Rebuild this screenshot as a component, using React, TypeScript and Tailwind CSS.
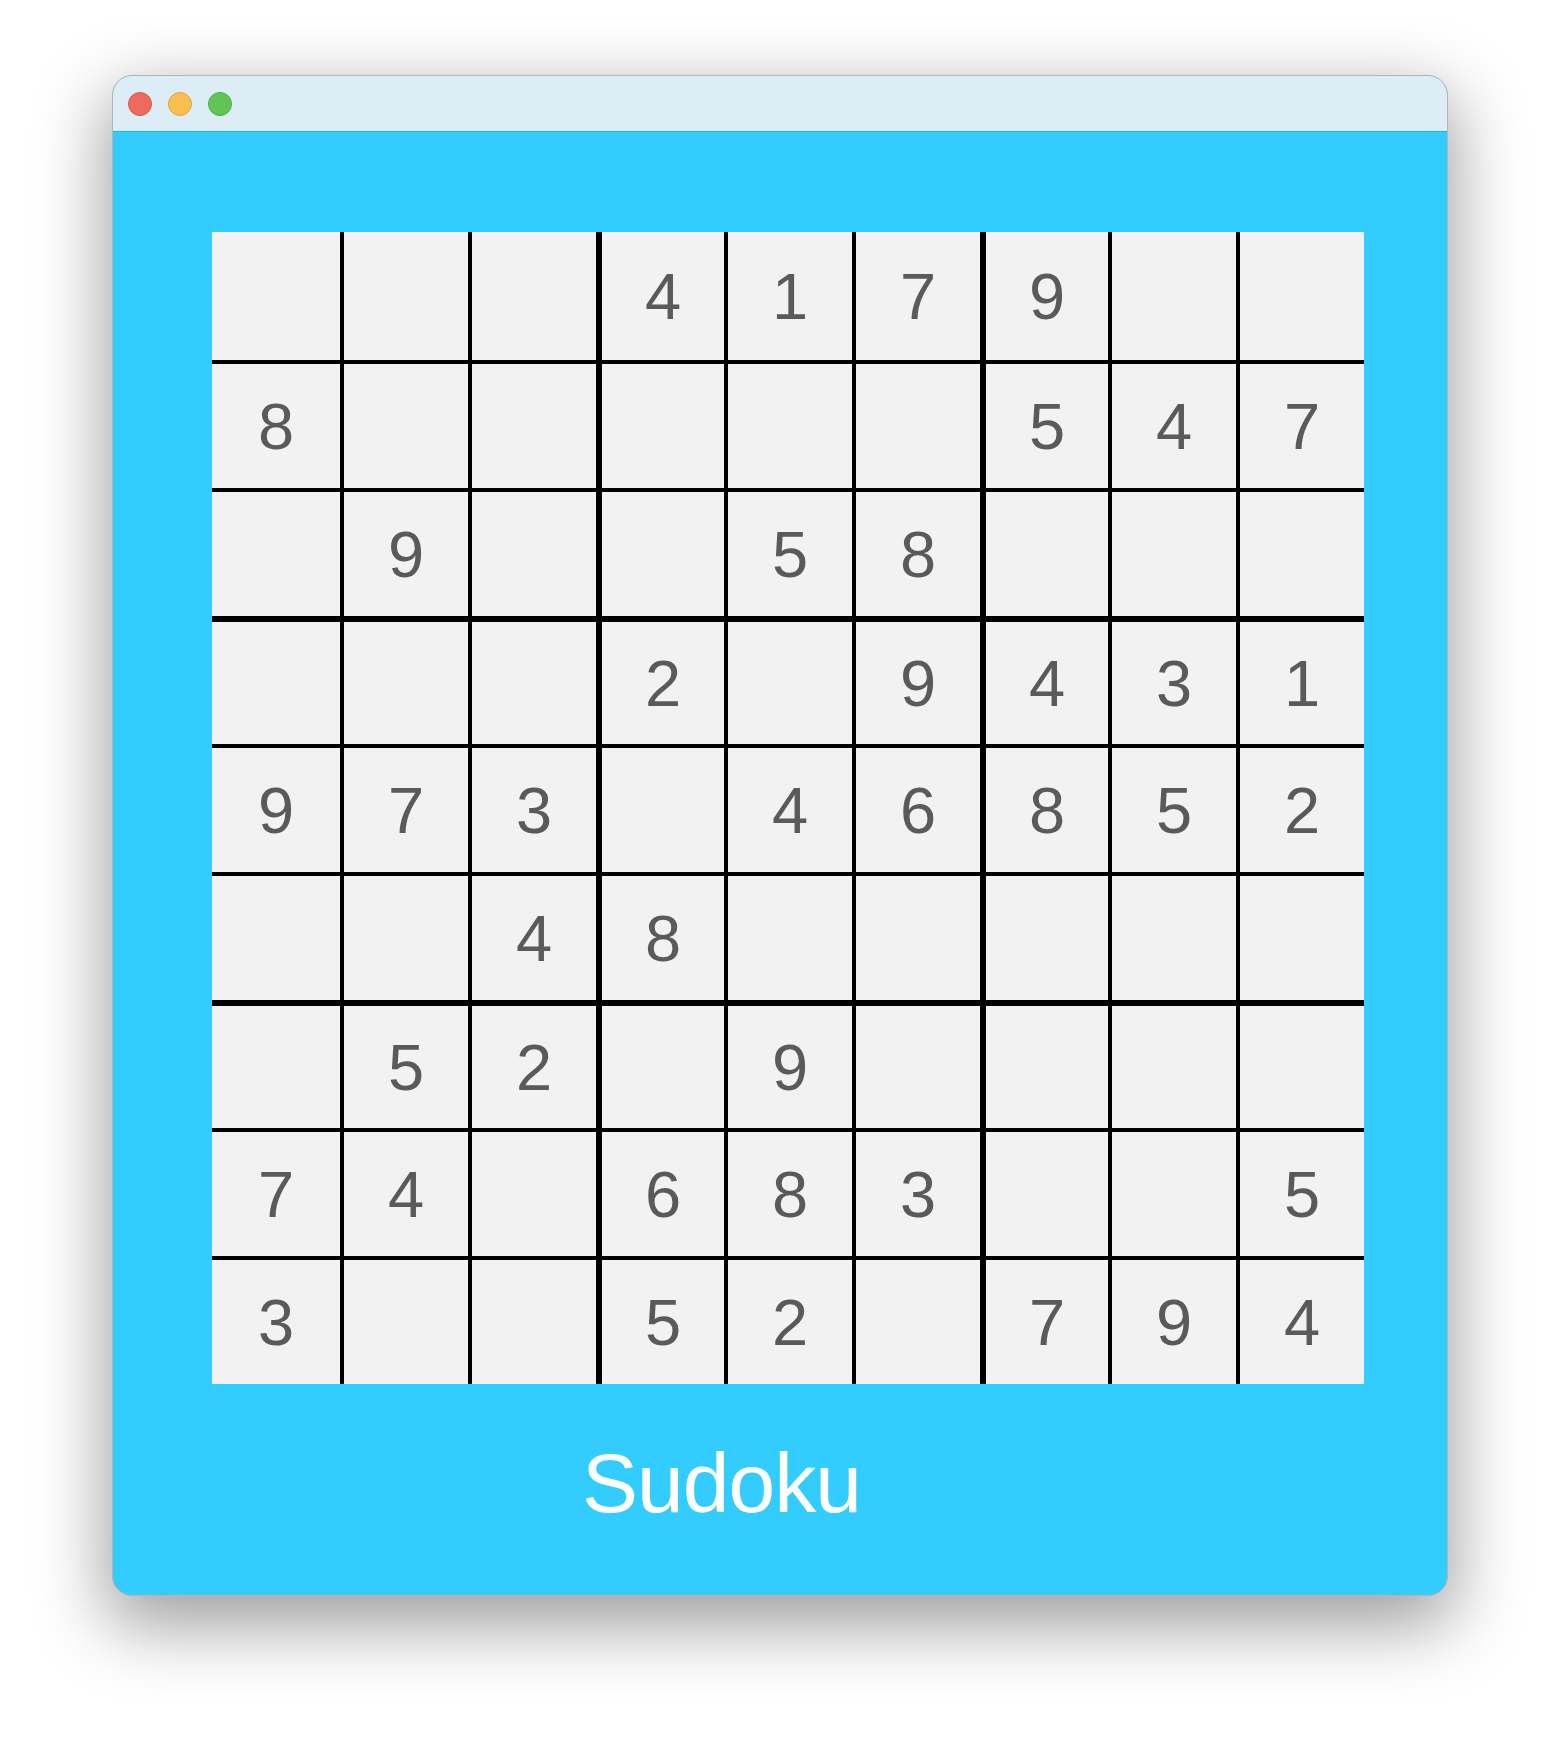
import React from 'react';

// 0 = empty cell
const puzzle: number[][] = [
  [0, 0, 0, 4, 1, 7, 9, 0, 0],
  [8, 0, 0, 0, 0, 0, 5, 4, 7],
  [0, 9, 0, 0, 5, 8, 0, 0, 0],
  [0, 0, 0, 2, 0, 9, 4, 3, 1],
  [9, 7, 3, 0, 4, 6, 8, 5, 2],
  [0, 0, 4, 8, 0, 0, 0, 0, 0],
  [0, 5, 2, 0, 9, 0, 0, 0, 0],
  [7, 4, 0, 6, 8, 3, 0, 0, 5],
  [3, 0, 0, 5, 2, 0, 7, 9, 4],
];

const leftBorder = (c: number) => {
  if (c === 0) return '';
  if (c % 3 === 0) return 'border-l-[6px]';
  return 'border-l-4';
};

const topBorder = (r: number) => {
  if (r === 0) return '';
  if (r % 3 === 0) return 'border-t-[6px]';
  return 'border-t-4';
};

const Cell: React.FC<{ value: number; row: number; col: number }> = ({ value, row, col }) => (
  <div
    className={`flex items-center justify-center bg-[#f2f2f2] border-black text-[65px] leading-none text-[#5a5a5a] ${leftBorder(col)} ${topBorder(row)}`}
  >
    {value !== 0 ? value : ''}
  </div>
);

const TrafficLights: React.FC = () => (
  <div className="flex items-center gap-4 pl-[15px]">
    <span className="w-6 h-6 rounded-full bg-[#ee6a5f] border border-[#d9564b]" />
    <span className="w-6 h-6 rounded-full bg-[#f6bf4f] border border-[#dfa53a]" />
    <span className="w-6 h-6 rounded-full bg-[#61c454] border border-[#4eab41]" />
  </div>
);

const App: React.FC = () => {
  return (
    <div
      className="min-h-[1744px] w-full bg-white pt-[75px] flex justify-center items-start"
      style={{ fontFamily: '"Liberation Sans", Arial, sans-serif' }}
    >
      <div className="w-[1336px] rounded-[20px] overflow-hidden border border-[#b4b4b4] bg-[#33ccff] shadow-[0_24px_70px_6px_rgba(0,0,0,0.38)]">
        <div className="h-[56px] flex items-center bg-[#ddedf6] border-b border-[#1fb0e6]">
          <TrafficLights />
        </div>

        <div className="pt-[100px] pl-[99px] pb-[70px]">
          <div className="grid grid-cols-[repeat(9,128px)] grid-rows-[repeat(9,128px)] w-[1152px]">
            {puzzle.map((rowVals, r) =>
              rowVals.map((v, c) => <Cell key={`${r}-${c}`} value={v} row={r} col={c} />)
            )}
          </div>

          <div className="mt-[57px] pl-[370px] text-[84px] leading-none text-white tracking-[-1px]">
            Sudoku
          </div>
        </div>
      </div>
    </div>
  );
};

export default App;
